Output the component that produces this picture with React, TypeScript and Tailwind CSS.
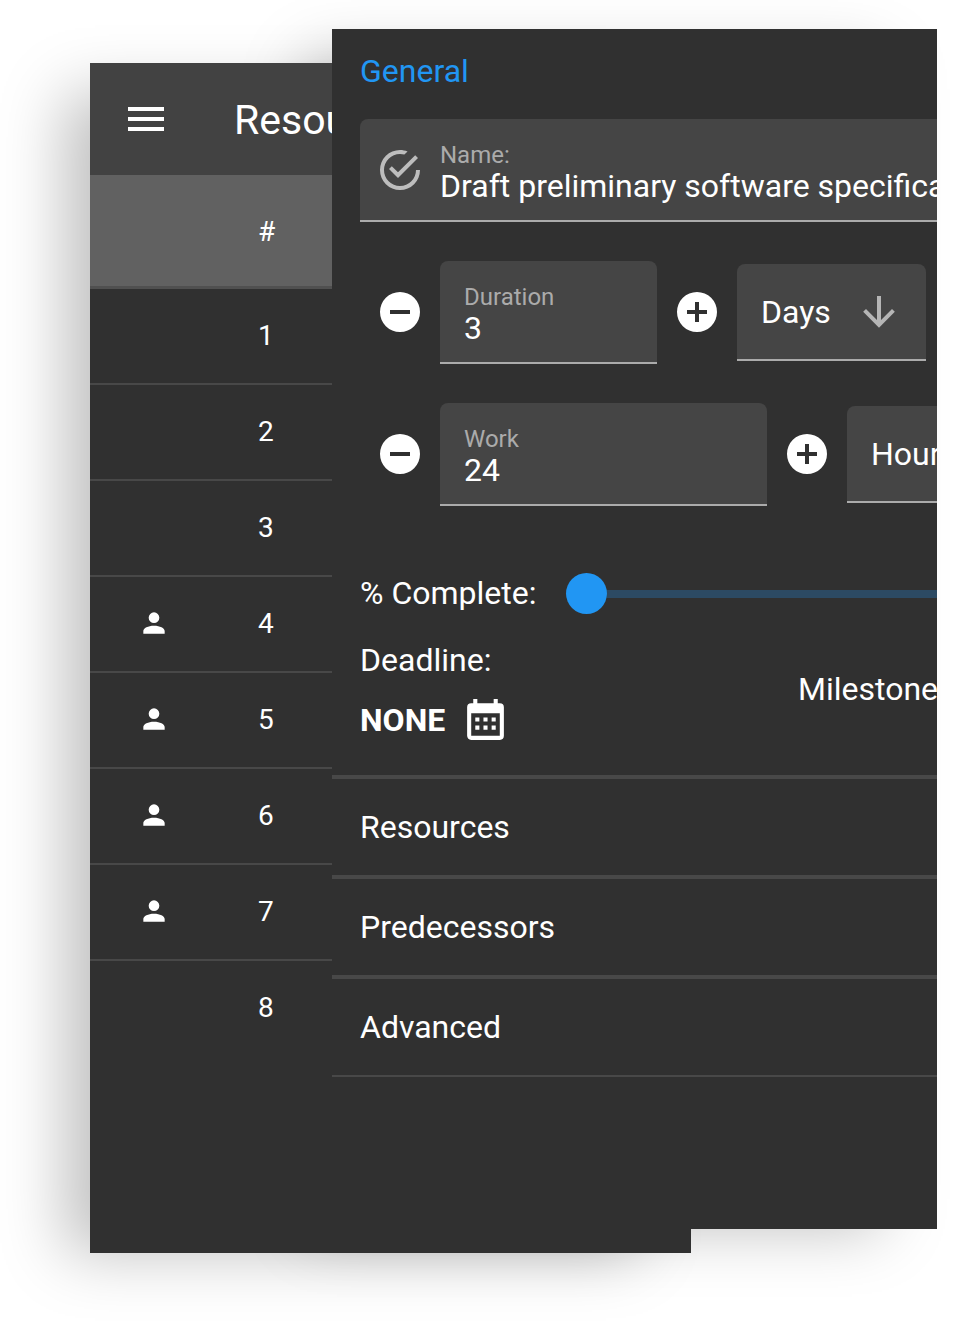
const CHECK = "M20,12A8,8 0 0,1 12,20A8,8 0 0,1 4,12A8,8 0 0,1 12,4C12.76,4 13.5,4.11 14.2,4.31L15.77,2.74C14.61,2.26 13.34,2 12,2A10,10 0 0,0 2,12A10,10 0 0,0 12,22A10,10 0 0,0 22,12M7.91,10.08L6.5,11.5L11,16L21,6L19.59,4.58L11,13.17L7.91,10.08Z";
const MINUS = "M17,13H7V11H17M12,2A10,10 0 0,0 2,12A10,10 0 0,0 12,22A10,10 0 0,0 22,12A10,10 0 0,0 12,2Z";
const PLUS = "M17,13H13V17H11V13H7V11H11V7H13V11H17M12,2A10,10 0 0,0 2,12A10,10 0 0,0 12,22A10,10 0 0,0 22,12A10,10 0 0,0 12,2Z";
const ARROW = "M11,4H13V16L18.5,10.5L19.92,11.92L12,19.84L4.08,11.92L5.5,10.5L11,16V4Z";
const CAL = "M9,10V12H7V10H9M13,10V12H11V10H13M17,10V12H15V10H17M19,3A2,2 0 0,1 21,5V19A2,2 0 0,1 19,21H5C3.89,21 3,20.1 3,19V5A2,2 0 0,1 5,3H6V1H8V3H16V1H18V3H19M19,19V8H5V19H19M9,14V16H7V14H9M13,14V16H11V14H13M17,14V16H15V14H17Z";
const MENU = "M3,6H21V8H3V6M3,11H21V13H3V11M3,16H21V18H3V16Z";
const PERSON = "M12,4A4,4 0 0,1 16,8A4,4 0 0,1 12,12A4,4 0 0,1 8,8A4,4 0 0,1 12,4M12,14C16.42,14 20,15.79 20,18V20H4V18C4,15.79 7.58,14 12,14Z";

function Icon({ d, className }: { d: string; className: string }) {
  return (
    <svg viewBox="0 0 24 24" className={className} fill="currentColor">
      <path d={d} />
    </svg>
  );
}

const rows = [
  { n: 1, p: false },
  { n: 2, p: false },
  { n: 3, p: false },
  { n: 4, p: true },
  { n: 5, p: true },
  { n: 6, p: true },
  { n: 7, p: true },
  { n: 8, p: false },
];

function Stepper({ label, value, width, unit, unitWidth }: { label: string; value: string; width: string; unit: string; unitWidth: string }) {
  return (
    <div className="flex items-center h-[103px] shrink-0">
      <Icon d={MINUS} className="w-12 h-12 text-white ml-4 shrink-0 -mt-[2px]" />
      <div className={`${width} shrink-0 ml-4 h-[103px] bg-[#454545] rounded-t-lg border-b-2 border-[#ababab] pl-6 pt-[22px]`}>
        <div className="text-[24px] leading-[28px] text-[#ababab]">{label}</div>
        <div className="text-[32px] leading-[34px] text-white">{value}</div>
      </div>
      <Icon d={PLUS} className="w-12 h-12 text-white ml-4 shrink-0 -mt-[2px]" />
      <div className={`${unitWidth} shrink-0 ml-4 h-[97px] bg-[#454545] rounded-t-lg border-b-2 border-[#ababab] pl-6 flex items-center`}>
        <span className="text-[32px] text-white leading-none whitespace-nowrap mt-[1px]">{unit}</span>
        {unit === "Days" && <Icon d={ARROW} className="w-12 h-12 text-[#b5b5b5] ml-[24px] shrink-0" />}
      </div>
    </div>
  );
}

function Section({ label, thin }: { label: string; thin?: boolean }) {
  return (
    <div className={`${thin ? "h-[98px] border-b-2" : "h-[100px] border-b-4"} pl-[28px] flex items-center text-[32px] text-white border-[#484848]`}>
      {label}
    </div>
  );
}

export default function App() {
  return (
    <div className="relative w-[962px] h-[1322px] bg-white overflow-hidden font-['Roboto',sans-serif]">
      {/* shadow of the front window, cast only on the page */}
      <div className="absolute left-[332px] top-[29px] w-[605px] h-[1200px] shadow-[-40px_15px_60px_-15px_rgba(0,0,0,0.25)]" />

      {/* back window */}
      <div className="absolute left-[90px] top-[63px] w-[601px] h-[1190px] bg-[#303030] shadow-[-40px_15px_60px_-15px_rgba(0,0,0,0.25)] overflow-hidden">
        <div className="h-[112px] bg-[#424242] flex items-center">
          <Icon d={MENU} className="w-12 h-12 text-white ml-[32px] shrink-0" />
          <div className="ml-[64px] text-[41px] text-white leading-none mt-[2px]">Resources</div>
        </div>
        <div className="h-[114px] bg-[#616161] border-b-[3px] border-[#505050]">
          <div className="w-[242px] h-full flex items-center text-[28px] text-white pt-[2px]">
            <span className="ml-[168px]">#</span>
          </div>
        </div>
        {rows.map((r) => (
          <div key={r.n} className={`w-[242px] h-[96px] flex items-center border-b-2 ${r.n < 8 ? "border-[#484848]" : "border-transparent"}`}>
            <div className="w-[168px] flex pl-[48px] -mt-[3px]">
              {r.p && <Icon d={PERSON} className="w-[32px] h-[32px] text-white" />}
            </div>
            <span className="text-[28px] text-white">{r.n}</span>
          </div>
        ))}
      </div>

      {/* front window */}
      <div className="absolute left-[332px] top-[29px] w-[605px] h-[1200px] bg-[#303030] overflow-hidden">
        <div className="h-[90px] pl-[28px] flex items-center text-[32px] text-[#2196f3] pb-[6px]">General</div>
        <div className="ml-[28px] w-[800px] h-[103px] bg-[#454545] rounded-t-lg border-b-2 border-[#ababab] flex items-center">
          <Icon d={CHECK} className="w-12 h-12 text-[#bdbdbd] ml-4 shrink-0" />
          <div className="ml-4 pt-[6px]">
            <div className="text-[24px] leading-[26px] text-[#ababab]">Name:</div>
            <div className="text-[32px] leading-[36px] text-white whitespace-nowrap">Draft preliminary software specification</div>
          </div>
        </div>
        <div className="ml-[28px] w-[800px] mt-[39px] flex flex-col gap-[39px]">
          <Stepper label="Duration" value="3" width="w-[217px]" unit="Days" unitWidth="w-[189px]" />
          <Stepper label="Work" value="24" width="w-[327px]" unit="Hours" unitWidth="w-[189px]" />
        </div>
        <div className="ml-[28px] mt-[67px] flex items-center h-[41px] w-[800px]">
          <span className="text-[32px] text-white whitespace-nowrap w-[206px] shrink-0 -mt-[2px]">% Complete:</span>
          <div className="w-[41px] h-[41px] rounded-full bg-[#2196f3] shrink-0" />
          <div className="w-[400px] h-2 bg-[#2c4a63] shrink-0" />
        </div>
        <div className="ml-[28px] mt-[26px] h-[135px] flex w-[700px]">
          <div className="w-[438px]">
            <div className="text-[32px] leading-[40px] text-white">Deadline:</div>
            <div className="flex items-center mt-[15px]">
              <span className="text-[32px] leading-[40px] font-bold text-white">NONE</span>
              <Icon d={CAL} className="w-[49px] h-[49px] text-white ml-[16px] translate-y-[2px]" />
            </div>
          </div>
          <div className="text-[32px] text-white mt-[29px] leading-[40px]">Milestone</div>
        </div>
        <div className="border-t-4 border-[#484848]">
          <Section label="Resources" />
          <Section label="Predecessors" />
          <Section label="Advanced" thin />
        </div>
      </div>
    </div>
  );
}
